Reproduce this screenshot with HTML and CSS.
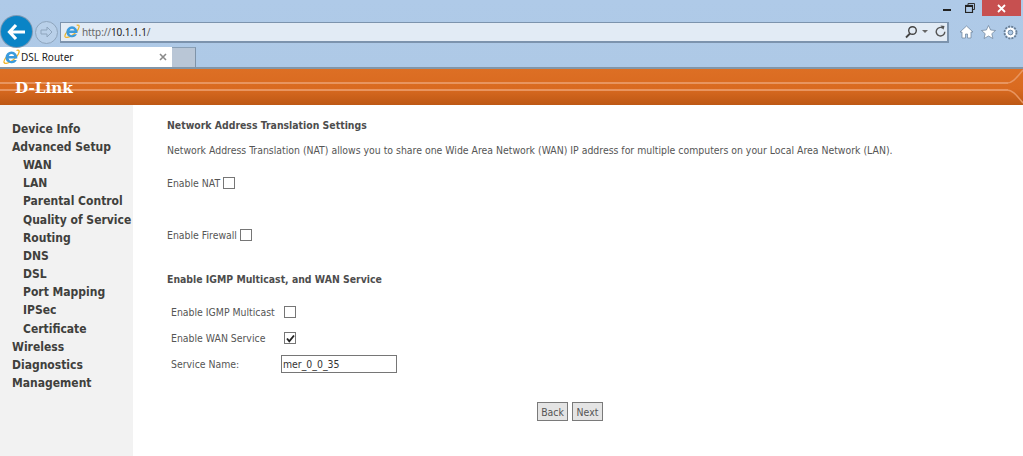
FILE: index.html
```html
<!DOCTYPE html>
<html lang="en">
<head>
<meta charset="utf-8">
<title>DSL Router</title>
<link rel="stylesheet" href="styles.css">
</head>
<body>
<header class="chrome">
  <div class="winbar">
    <span class="win-btn"><span class="min-glyph"></span></span>
    <span class="win-btn"><svg width="10" height="10" viewBox="0 0 10 10"><path d="M3 2.500V.5h6.500v6H7.500" fill="none" stroke="#333" stroke-width="1"/><rect x=".5" y="2.500" width="7" height="7" fill="none" stroke="#222" stroke-width="1.200"/><path d="M.5 3.500h7" stroke="#222"/></svg></span>
    <span class="close-btn"><svg width="9" height="9" viewBox="0 0 9 9"><path d="M1 1l7 7M8 1L1 8" stroke="#fff" stroke-width="1.800"/></svg></span>
  </div>
  <div class="toolbar">
    <span class="back"><svg width="20" height="18" viewBox="0 0 20 18"><path d="M9 2L2.500 9 9 16M3 9h15" fill="none" stroke="#fff" stroke-width="3.200"/></svg></span>
    <span class="forward"><svg width="13" height="12" viewBox="0 0 13 12"><path d="M7 1l5 5-5 5V8H1V4h6z" fill="none" stroke="#8ea5bd" stroke-width="1"/></svg></span>
    <div class="address">
      <svg class="ie" width="16" height="15" viewBox="0 0 17 16"><use href="#ie-logo"/></svg>
      <span class="url"><span class="dim">http://</span>10.1.1.1<span class="dim">/</span></span>
      <svg class="addr-tools" width="44" height="14" viewBox="0 0 44 14"><circle cx="7.500" cy="5.500" r="3.800" fill="none" stroke="#444" stroke-width="1.400"/><path d="M5 8.500L1 12.500" stroke="#444" stroke-width="1.800"/><path d="M17 5h6l-3 3z" fill="#666"/><path d="M38 3.200a4.300 4.300 0 1 0 1.800 3.500" fill="none" stroke="#555" stroke-width="1.400"/><path d="M35.500 .5l4 .5-1 3.800z" fill="#555"/></svg>
    </div>
    <div class="tools">
      <svg width="15" height="14" viewBox="0 0 15 14"><path d="M7.500 1L1 7h2v6h3.500V9h2v4H12V7h2z" fill="#fff" stroke="#6a7f96" stroke-width=".7"/></svg>
      <svg width="15" height="14" viewBox="0 0 15 14"><path d="M7.500 .5l2.100 4.500 4.900.5-3.700 3.200 1.100 4.800-4.400-2.500L3.100 13.500l1.100-4.800L.5 5.500l4.900-.5z" fill="#fff" stroke="#6a7f96" stroke-width=".7"/></svg>
      <svg width="15" height="15" viewBox="0 0 15 15"><circle cx="7.500" cy="7.500" r="4" fill="none" stroke="#fff" stroke-width="2.400"/><circle cx="7.500" cy="7.500" r="6" fill="none" stroke="#6a7f96" stroke-width="1.800" stroke-dasharray="2 1.140"/><circle cx="7.500" cy="7.500" r="2.300" fill="none" stroke="#6a7f96" stroke-width=".8"/></svg>
    </div>
  </div>
  <div class="tabs">
    <div class="tab">
      <svg class="ie" width="17" height="16" viewBox="0 0 17 16"><use href="#ie-logo"/></svg>
      <span class="tab-title">DSL Router</span>
      <svg class="tab-x" width="8" height="8" viewBox="0 0 8 8"><path d="M1 1l6 6M7 1L1 7" stroke="#8a8a8a" stroke-width="1.600"/></svg>
    </div>
    <div class="tab-new"></div>
  </div>
</header>
<svg class="defs" width="0" height="0"><defs><symbol id="ie-logo" viewBox="0 0 17 16"><path d="M13.500 1.500c1.800-1 3 0 2.500 1.800-.6 2.400-4 6.800-8 9.200-3.500 2-6.500 2.500-7 .8-.3-1.200 .8-3.500 2.500-5.500" fill="none" stroke="#f0b429" stroke-width="1.300"/><path d="M8.500 2.500a6 6 0 0 0-6 6 6 6 0 0 0 11.300 2.500h-3a3 3 0 0 1-5.200-1.500h8.700a6 6 0 0 0-5.800-7zM5.800 7a2.800 2.800 0 0 1 5.400 0z" fill="#3b9bdc"/></symbol></defs></svg>
<div class="banner">
  <span class="streak streak-one"></span>
  <span class="streak streak-two"></span>
  <svg class="banner-end" width="16" height="35" viewBox="0 0 16 35"><path d="M0 14c6 0 10-6 16-13M0 21c6 0 10 6 16 13" fill="none" stroke="#e89560" stroke-width="1.500"/></svg>
  <span class="logo">D-Link</span>
</div>
<div class="page">
  <nav class="sidebar">
    <a>Device Info</a>
    <a>Advanced Setup</a>
    <a class="sub">WAN</a>
    <a class="sub">LAN</a>
    <a class="sub">Parental Control</a>
    <a class="sub">Quality of Service</a>
    <a class="sub">Routing</a>
    <a class="sub">DNS</a>
    <a class="sub">DSL</a>
    <a class="sub">Port Mapping</a>
    <a class="sub">IPSec</a>
    <a class="sub">Certificate</a>
    <a>Wireless</a>
    <a>Diagnostics</a>
    <a>Management</a>
  </nav>
  <main class="content">
    <h1 class="title">Network Address Translation Settings</h1>
    <p class="intro">Network Address Translation (NAT) allows you to share one Wide Area Network (WAN) IP address for multiple computers on your Local Area Network (LAN).</p>
    <div class="inline-field nat"><span>Enable NAT</span><span class="check"></span></div>
    <div class="inline-field firewall"><span>Enable Firewall</span><span class="check"></span></div>
    <h2 class="title igmp-title">Enable IGMP Multicast, and WAN Service</h2>
    <div class="form-grid">
      <span>Enable IGMP Multicast</span><span class="check"></span>
      <span>Enable WAN Service</span><span class="check"><svg width="9" height="9" viewBox="0 0 9 9"><path d="M1 4.500l2.300 2.800L8 1.500" fill="none" stroke="#222" stroke-width="1.900"/></svg></span>
      <span>Service Name:</span><span class="text-input">mer_0_0_35</span>
    </div>
    <div class="actions"><span class="btn">Back</span><span class="btn">Next</span></div>
  </main>
</div>
</body>
</html>
```
FILE: styles.css
```css
* { box-sizing: border-box; }
html, body { margin: 0; padding: 0; }
body { width: 1023px; height: 456px; overflow: hidden; background: #fff; font-family: "DejaVu Sans", sans-serif; font-stretch: condensed; }
.defs { position: absolute; }
.chrome { height: 69px; background: linear-gradient(#afcae8, #aec9e6); border-bottom: 2px solid #8296a8; }
.winbar { height: 17px; display: flex; justify-content: flex-end; align-items: flex-start; padding-right: 2px; }
.win-btn { width: 22px; height: 16px; display: flex; align-items: center; justify-content: center; margin-right: 1px; }
.min-glyph { width: 8px; height: 2px; background: #222; margin-top: 4px; }
.close-btn { width: 39px; height: 16px; background: #c75050; display: flex; align-items: center; justify-content: center; }
.toolbar { height: 30px; display: flex; align-items: center; position: relative; z-index: 1; }
.back { width: 31px; height: 31px; margin: -1px 0 0 1px; border-radius: 50%; background: #0a84c6; box-shadow: 0 0 0 1px #7d9ab5; display: flex; align-items: center; justify-content: center; }
.forward { width: 23px; height: 23px; margin-left: 3px; border-radius: 50%; border: 1px solid #8ea5bd; background: #b9d0e9; display: flex; align-items: center; justify-content: center; }
.address { width: 889px; height: 21px; margin-left: 2px; background: #e2ebf5; border: 1px solid #7c93ad; border-width: 1px 2px 2px 1px; display: flex; align-items: center; padding: 0 0 0 3px; font-size: 10px; color: #222; }
.address .ie { margin-right: 2px; }
.addr-tools { margin-right: -2px; }
.url { flex: 1; font-family: "Noto Sans", sans-serif; font-size: 10px; letter-spacing: -.1px; font-stretch: normal; }
.dim { color: #666; }
.tools { display: flex; gap: 7px; margin-left: 10px; align-items: center; }
.tabs { height: 20px; display: flex; }
.tab { width: 172px; height: 20px; background: #fff; display: flex; align-items: center; padding: 0 4px 0 3px; font-family: "Noto Sans", sans-serif; font-stretch: normal; font-size: 10px; color: #222; }
.tab-title { flex: 1; margin-left: 1px; }
.tab-x { margin-right: 1px; }
.tab-new { width: 24px; height: 20px; background: #b9c6d6; border-right: 1px solid #7f93a8; border-top: 1px solid #8aa0b6; }
.banner { height: 36px; position: relative; background: linear-gradient(#dd6f24, #d96a20 55%, #bd5815); padding-left: 15px; display: flex; align-items: center; overflow: hidden; }
.logo { position: relative; font-family: "DejaVu Serif", serif; font-stretch: normal; font-weight: bold; font-size: 15.200px; color: #fff; margin-top: 1px; }
.streak { position: absolute; left: 0; right: 15px; height: 2px; background: #e89560; }
.streak-one { top: 13px; }
.streak-two { top: 20px; }
.banner-end { position: absolute; right: 0; top: 0; }
.page { display: flex; height: 351px; }
.sidebar { width: 133px; background: #f2f2f2; padding-top: 14.600px; display: flex; flex-direction: column; flex-shrink: 0; }
.sidebar a { height: 18.200px; line-height: 18px; padding-left: 12px; font-weight: bold; font-size: 12px; color: #40403c; white-space: nowrap; }
.sidebar a.sub { padding-left: 23px; }
.content { flex: 1; padding: 14px 0 0 34px; font-size: 10.400px; color: #555; }
.title { margin: 0; font-size: 10.400px; font-weight: bold; line-height: 13px; color: #4d4d4d; }
.intro { margin: 12px 0 0; line-height: 13px; white-space: nowrap; }
.inline-field { display: flex; align-items: center; gap: 3px; height: 14px; }
.nat { margin-top: 19px; }
.firewall { margin-top: 38px; }
.igmp-title { margin-top: 31px; }
.check { width: 12px; height: 12px; border: 1px solid #767676; background: #fff; display: flex; align-items: center; justify-content: center; }
.form-grid { display: grid; grid-template-columns: 110px 116px; grid-template-rows: 14px 14px 14px; row-gap: 12px; margin: 19px 0 0 4px; align-items: center; }
.form-grid .check { margin-left: 3px; }
.text-input { height: 18px; width: 116px; border: 1px solid #767676; padding-left: 1px; line-height: 16px; color: #333; font-size: 10.400px; }
.actions { display: flex; justify-content: center; gap: 4px; margin: 31px 0 0 1px; width: 804px; }
.btn { width: 31px; height: 19px; background: #e4e4e4; border: 1px solid #7a7a7a; display: flex; align-items: center; justify-content: center; color: #555; }
```
